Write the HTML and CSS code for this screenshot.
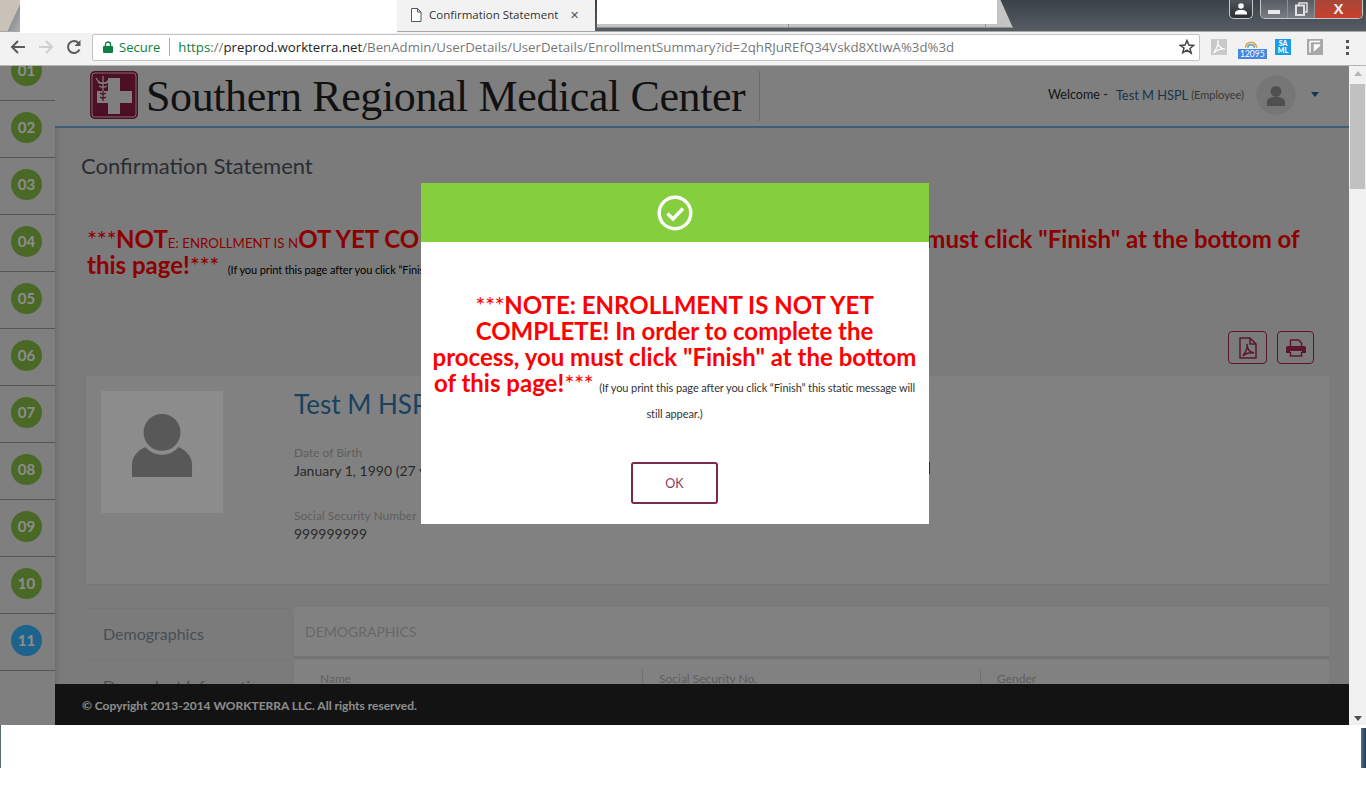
FILE: index.html
```html
<!DOCTYPE html>
<html lang="en">
<head>
	<meta charset="UTF-8">
	<title>Confirmation Statement</title>
	<link rel="stylesheet" href="styles.css">
</head>
<body>
	<div class="tabstrip">
		<div class="corner-tab"></div>
		<div class="blank-tab"></div>
		<div class="active-tab">
			<svg class="tab-icon" width="12" height="14" viewBox="0 0 12 14"><path d="M1.500.5h6l3.500 3.500v9.500h-9.500zM7.500.5v3.500h3.500" fill="#fff" stroke="#555"/></svg>
			<span class="tab-title">Confirmation Statement</span>
			<span class="tab-close">&#10005;</span>
		</div>
		<div class="back-tabs">
			<div class="blank-tab-2"></div>
		</div>
		<div class="window-buttons">
			<div class="win-user">
				<svg width="14" height="12" viewBox="0 0 14 12"><circle cx="7" cy="3" r="2.800" fill="#fff"/><path d="M1 11.500v-2c1-2 3-2.500 6-2.500s5 .5 6 2.500v2z" fill="#fff"/></svg>
			</div>
			<div class="win-group">
				<div class="win-min"><i></i></div>
				<div class="win-max">
					<svg width="13" height="14" viewBox="0 0 13 14"><path d="M4 3V1h8v9h-3" fill="none" stroke="#e0e0e0" stroke-width="1.500"/><rect x="1" y="3.500" width="8" height="9.500" fill="none" stroke="#e0e0e0" stroke-width="2"/></svg>
				</div>
				<div class="win-close">X</div>
			</div>
		</div>
	</div>

	<div class="toolbar">
		<svg class="nav-icon" width="18" height="18" viewBox="0 0 18 18"><path d="M16 9H3M9 3L3 9l6 6" fill="none" stroke="#5a5a5a" stroke-width="2"/></svg>
		<svg class="nav-icon" width="18" height="18" viewBox="0 0 18 18"><path d="M2 9h13M9 3l6 6-6 6" fill="none" stroke="#cfcfcf" stroke-width="2"/></svg>
		<svg class="nav-icon" width="18" height="18" viewBox="0 0 18 18"><path d="M14.500 11.500A6 6 0 1 1 13.500 5" fill="none" stroke="#5a5a5a" stroke-width="2"/><path d="M15.500 2v6h-6z" fill="#5a5a5a"/></svg>
		<div class="omnibox">
			<svg class="lock" width="10" height="12" viewBox="0 0 10 12"><path d="M2.500 5V3.500a2.500 2.500 0 0 1 5 0V5" fill="none" stroke="#0b8043" stroke-width="1.400"/><rect y="5" width="10" height="7" rx="1" fill="#0b8043"/></svg>
			<span class="secure">Secure</span>
			<span class="url"><span class="url-green">https</span><span class="url-grey">://</span><span class="url-host">preprod.workterra.net</span><span class="url-grey">/BenAdmin/UserDetails/UserDetails/EnrollmentSummary?id=2qhRJuREfQ34Vskd8XtIwA%3d%3d</span></span>
			<svg class="star" width="16" height="16" viewBox="0 0 16 16"><path d="M8 1.500l1.900 4.500 4.800.4-3.700 3.100 1.200 4.700L8 11.200l-4.200 2.500L5 9 1.300 6.400l4.800-.4z" fill="none" stroke="#444" stroke-width="1.500"/></svg>
		</div>
		<div class="extensions">
			<div class="ext ext-pdf">
				<svg width="16" height="16" viewBox="0 0 16 16"><path d="M7 2c-1 3 2 8 7 8-4-.5-9 1-11 4 1-3 5-7 4-12z" fill="none" stroke="#fff" stroke-width="1.200"/></svg>
			</div>
			<div class="ext ext-rainbow">
				<svg width="20" height="12" viewBox="0 0 20 12"><path d="M3 12a7 7 0 0 1 14 0" fill="none" stroke="#e8a33d" stroke-width="2"/><path d="M6 12a4 4 0 0 1 8 0" fill="none" stroke="#6aa7c9" stroke-width="2"/></svg>
				<span class="badge">12095</span>
			</div>
			<div class="ext ext-saml">SA<br>ML</div>
			<div class="ext ext-grey">
				<svg width="14" height="14" viewBox="0 0 14 14"><path d="M2 1.500h10M2 1.500v11M6.500 5h5v.5L6.500 10z" fill="#fff" stroke="#fff" stroke-width="1.500"/></svg>
			</div>
			<div class="menu-dots"><i></i><i></i><i></i></div>
		</div>
	</div>

	<div class="viewport">
		<div class="page">
			<div class="rail">
				<div class="step"><span class="step-num">01</span></div>
				<div class="step"><span class="step-num">02</span></div>
				<div class="step"><span class="step-num">03</span></div>
				<div class="step"><span class="step-num">04</span></div>
				<div class="step"><span class="step-num">05</span></div>
				<div class="step"><span class="step-num">06</span></div>
				<div class="step"><span class="step-num">07</span></div>
				<div class="step"><span class="step-num">08</span></div>
				<div class="step"><span class="step-num">09</span></div>
				<div class="step"><span class="step-num">10</span></div>
				<div class="step current"><span class="step-num">11</span></div>
			</div>

			<div class="main">
				<header class="site-header">
					<div class="logo">
						<svg class="logo-mark" width="50" height="50" viewBox="0 0 50 50">
							<rect x="1" y="0" width="48" height="48" rx="5" fill="#8f1c45"/>
							<rect x="3" y="2" width="44" height="44" rx="3" fill="none" stroke="#d8c4cb" stroke-width="1"/>
							<path d="M19 7h12v13h12v12H31v11H19V32H8V20h11z" fill="#e8e8e8"/>
							<path d="M7 7c2 4 5 5 7 5s5-1 7-5M14 5v15M9 11c2 2 8 2 10 0M10 15c2 1.500 6 1.500 8 0" fill="none" stroke="#e8e8e8" stroke-width="1.200"/>
							<path d="M14 20v10M11 22c2 1.500 4 1.500 6 0M11 26c2 1.500 4 1.500 6 0" fill="none" stroke="#8f1c45" stroke-width="1.200"/>
						</svg>
						<span class="logo-text">Southern Regional Medical Center</span>
					</div>
					<div class="user-box">
						<span class="welcome">Welcome -</span>
						<span class="user-name">Test M HSPL</span>
						<span class="user-role">(Employee)</span>
						<span class="user-avatar">
							<svg width="20" height="22" viewBox="0 0 22 24"><circle cx="11" cy="7" r="6" fill="#919191"/><path d="M1 23v-4c0-4 4-6 10-6s10 2 10 6v4z" fill="#919191"/></svg>
						</span>
						<span class="user-caret"></span>
					</div>
				</header>

				<h1 class="page-title">Confirmation Statement</h1>

				<p class="notice"><span class="asterisks">***</span>NOT<span class="notice-small">E: ENROLLMENT IS N</span>OT YET COMPLETE! In order to complete the process, you must click "Finish" at the bottom of this page!<span class="asterisks">***</span> <span class="notice-note">(If you print this page after you click “Finish” this static message will still appear.)</span></p>

				<div class="doc-actions">
					<button class="doc-btn doc-pdf">
						<svg width="18" height="22" viewBox="0 0 18 22"><path d="M1 1h10l6 6v14H1z" fill="none" stroke="#a82850" stroke-width="1.500"/><path d="M11 1v6h6" fill="none" stroke="#a82850" stroke-width="1.500"/><path d="M8 7c0 4 2 8 7 9-4-.5-8 0-11 3 2-3 5-7 4-12z" fill="none" stroke="#a82850" stroke-width="1.500"/></svg>
					</button>
					<button class="doc-btn doc-print">
						<svg width="20" height="18" viewBox="0 0 20 18"><path d="M4.500 7V1h8l3 3v3M4.500 13v4h11v-4" fill="none" stroke="#a82850" stroke-width="1.500"/><path d="M0 9a2 2 0 0 1 2-2h16a2 2 0 0 1 2 2v5h-4v-2H4v2H0z" fill="#a82850"/></svg>
					</button>
				</div>

				<section class="profile">
					<div class="profile-photo">
						<svg width="62" height="64" viewBox="0 0 62 66"><circle cx="31" cy="20" r="19" fill="#a0a0a0"/><path d="M0 66V54C0 44 7 38 14 35c4 5 10 8 17 8s13-3 17-8c7 3 14 9 14 19v12z" fill="#a0a0a0"/></svg>
					</div>
					<div class="profile-info">
						<h2 class="profile-name">Test M HSPL</h2>
						<div class="field">
							<div class="field-label">Date of Birth</div>
							<div class="field-value">January 1, 1990 (27 years)</div>
						</div>
						<div class="field">
							<div class="field-label">Social Security Number</div>
							<div class="field-value">999999999</div>
						</div>
					</div>
					<span class="profile-edge"></span>
				</section>

				<section class="details">
					<nav class="side-tabs">
						<div class="side-tab">Demographics</div>
						<div class="side-tab">Dependent Information</div>
					</nav>
					<div class="detail-panel">
						<div class="panel-head">DEMOGRAPHICS</div>
						<div class="panel-row">
							<div class="panel-cell">Name</div>
							<div class="panel-cell">Social Security No.</div>
							<div class="panel-cell">Gender</div>
						</div>
					</div>
				</section>

				<footer class="site-footer">© Copyright 2013-2014 WORKTERRA LLC. All rights reserved.</footer>
			</div>

			<div class="backdrop">
				<div class="modal">
					<div class="modal-head">
						<svg width="36" height="36" viewBox="0 0 36 36"><circle cx="18" cy="18" r="15.800" fill="none" stroke="#fff" stroke-width="3.400"/><path d="M10.500 18.500l5.500 5.500 10-10.500" fill="none" stroke="#fff" stroke-width="3.500"/></svg>
					</div>
					<div class="modal-body">
						<p class="modal-text"><span class="asterisks">***</span>NOTE: ENROLLMENT IS NOT YET COMPLETE! In order to complete the process, you must click "Finish" at the bottom of this page!<span class="asterisks">***</span> <span class="modal-note">(If you print this page after you click “Finish” this static message will still appear.)</span></p>
						<button class="modal-ok">OK</button>
					</div>
				</div>
			</div>
		</div>

		<div class="scrollbar">
			<span class="arrow-up"></span>
			<span class="thumb"></span>
			<span class="arrow-down"></span>
		</div>
	</div>

	<div class="bottom-strip">
		<span class="sliver-left"></span>
		<span class="sliver-right"></span>
	</div>
</body>
</html>
```

FILE: styles.css
```css
* {
	box-sizing: border-box;
}

html,
body {
	margin: 0;
	padding: 0;
	background: #fff;
}

body {
	width: 1366px;
	height: 812px;
	overflow: hidden;
	font-family: 'Lato', sans-serif;
}

/* browser chrome */
.tabstrip {
	height: 31px;
	display: flex;
	position: relative;
	background: linear-gradient(#3a4149, #565d64);
}

.corner-tab {
	width: 20px;
	height: 31px;
	background: linear-gradient(115deg, #c9c2b8 0%, #c9c2b8 62%, #8f9498 66%, #aeb1b4 100%);
}

.blank-tab {
	width: 377px;
	height: 33px;
	background: #fff;
	z-index: 1;
}

.active-tab {
	width: 198px;
	height: 31px;
	display: flex;
	align-items: center;
	padding: 0 0 2px 13px;
	background: #f2f2f2;
	font-family: 'Open Sans', sans-serif;
	font-size: 11.500px;
	color: #333;
}

.tab-title {
	margin-left: 7px;
}

.tab-close {
	margin-left: 12px;
	font-size: 11px;
	color: #555;
}

.back-tabs {
	width: 416px;
	height: 28px;
	margin-left: 2px;
	border-bottom: 1px solid #8f8f8f;
	background: linear-gradient(90deg, transparent 191px, #8f8f8f 191px, #8f8f8f 192px, transparent 192px, transparent 388px, #8f8f8f 388px, #8f8f8f 389px, transparent 389px), #c4c4c4;
	clip-path: polygon(0 0, 97% 0, 100% 100%, 0 100%);
}

.blank-tab-2 {
	width: 400px;
	height: 24px;
	background: #fff;
}

.window-buttons {
	margin-left: auto;
	margin-right: 3px;
	display: flex;
	align-items: flex-start;
	gap: 7px;
}

.win-user {
	width: 24px;
	height: 19px;
	display: flex;
	align-items: center;
	justify-content: center;
	border: 1px solid #c5c8ca;
	border-top: 0;
	border-radius: 0 0 5px 5px;
	background: linear-gradient(#4e5459, #2b3035);
}

.win-group {
	display: flex;
	height: 19px;
	border: 1px solid #c5c8ca;
	border-top: 0;
	border-radius: 0 0 5px 5px;
	overflow: hidden;
}

.win-min,
.win-max {
	width: 27px;
	display: flex;
	align-items: center;
	justify-content: center;
	border-right: 1px solid #8d9296;
	background: linear-gradient(#565c61, #787e83);
}

.win-min i {
	width: 12px;
	height: 4px;
	margin-top: 6px;
	background: #e8e8e8;
}

.win-close {
	width: 47px;
	text-align: center;
	font-family: 'Liberation Sans', sans-serif;
	font-size: 15px;
	font-weight: 700;
	line-height: 17px;
	color: #eee;
	background: linear-gradient(#a8463a, #c8402c);
}

.toolbar {
	height: 35px;
	display: flex;
	align-items: center;
	padding: 0 0 3px 9px;
	border-top: 1px solid #a8a8a8;
	border-bottom: 1px solid #b5b5b5;
	background: #f2f2f2;
}

.nav-icon {
	margin-right: 10px;
}

.omnibox {
	width: 1108px;
	height: 27px;
	margin-left: -1px;
	display: flex;
	align-items: center;
	padding: 0 4px 0 10px;
	border: 1px solid #c4c4c4;
	border-radius: 2px;
	background: #fff;
	font-family: 'Open Sans', sans-serif;
	font-size: 13.260px;
	white-space: nowrap;
}

.secure {
	margin-left: 6px;
	padding-right: 9px;
	border-right: 1px solid #aaa;
	color: #0b8043;
	font-size: 13px;
}

.url {
	margin-left: 8px;
	color: #777;
}

.url-green {
	color: #0b8043;
}

.url-host {
	color: #222;
}

.star {
	margin-left: auto;
}

.extensions {
	flex: 1;
	display: flex;
	align-items: center;
	padding-left: 11px;
}

.ext {
	width: 16px;
	height: 16px;
	margin-right: 16px;
	display: flex;
	align-items: center;
	justify-content: center;
}

.ext-pdf {
	background: #c9c9c9;
}

.ext-rainbow {
	position: relative;
	align-items: flex-start;
	margin-top: -4px;
}

.badge {
	position: absolute;
	top: 12px;
	left: -5px;
	padding: 0 2px;
	background: #4a86e0;
	color: #fff;
	font-size: 8.500px;
	line-height: 10px;
}

.ext-saml {
	background: #189ee8;
	color: #fff;
	font-size: 7px;
	font-weight: 900;
	line-height: 7px;
	text-align: center;
}

.ext-grey {
	background: #a8a8a8;
}

.menu-dots {
	display: flex;
	flex-direction: column;
	gap: 3px;
	margin-left: 7px;
}

.menu-dots i {
	width: 3px;
	height: 3px;
	background: #555;
}

/* page under the dialog, colours are before the 45% backdrop */
.viewport {
	height: 659px;
	display: flex;
}

.page {
	width: 1349px;
	height: 659px;
	display: flex;
	position: relative;
	overflow: hidden;
	background: #e0e0e0;
}

.rail {
	width: 55px;
	flex: none;
	margin-top: -22px;
	background: #e8e8e8;
	box-shadow: 2px 0 4px #c4c4c4;
	z-index: 1;
}

.step {
	height: 57px;
	padding: 11px 0 0 11px;
	border-bottom: 1px solid #9b9b9b;
}

.step-num {
	width: 31px;
	height: 31px;
	display: block;
	border-radius: 50%;
	background: #88c048;
	color: #fff;
	font-size: 15px;
	font-weight: 700;
	line-height: 31px;
	text-align: center;
}

.current .step-num {
	background: #38b4ff;
}

.main {
	flex: 1;
	min-width: 0;
	position: relative;
}

.site-header {
	height: 62px;
	display: flex;
	justify-content: space-between;
	position: relative;
	padding: 5px 0 0 34px;
	border-bottom: 2px solid #70b0da;
	background: #e8e8e8;
	z-index: 2;
}

.logo {
	width: 671px;
	height: 50px;
	display: flex;
	align-items: center;
	border-right: 1px solid #c4c4c4;
}

.logo-mark {
	flex: none;
}

.logo-text {
	margin-left: 7px;
	padding-top: 2px;
	font-family: 'Liberation Serif', serif;
	font-size: 44px;
	letter-spacing: -0.400px;
	line-height: 50px;
	color: #1f1f1f;
	white-space: nowrap;
}

.user-box {
	display: flex;
	align-items: center;
	padding: 0 30px 8px 0;
	font-size: 12.800px;
	color: #2a2a2a;
}

.welcome {
	font-size: 12.600px;
}

.user-name {
	margin-left: 8px;
	color: #2f6090;
}

.user-role {
	margin-left: 3px;
	font-size: 11px;
	color: #666;
}

.user-avatar {
	width: 40px;
	height: 40px;
	margin: 0 15px 0 12px;
	display: flex;
	align-items: flex-end;
	justify-content: center;
	padding-bottom: 7px;
	border-radius: 50%;
	border: 1px solid #dcdcdc;
	background: #d8d8d8;
}

.user-caret {
	width: 0;
	height: 0;
	border: 4px solid transparent;
	border-top: 5px solid #2f6090;
	border-bottom: 0;
}

.page-title {
	margin: 24px 0 0 26px;
	font-size: 22px;
	font-weight: 400;
	line-height: 28px;
	color: #4d555d;
}

.notice {
	margin: 46px 30px 0 32px;
	font-size: 24px;
	font-weight: 700;
	line-height: 26px;
	color: #f00;
}

.notice-small {
	font-size: 13.300px;
	font-weight: 400;
	line-height: 1;
}

.asterisks {
	font-weight: 400;
	letter-spacing: -0.500px;
}

.notice-note {
	margin-left: 3px;
	font-size: 11px;
	font-weight: 400;
	letter-spacing: -0.100px;
	line-height: 1;
	color: #000;
}

.doc-actions {
	height: 33px;
	margin: 53px 35px 0 0;
	display: flex;
	justify-content: flex-end;
	gap: 10px;
}

.doc-btn {
	width: 39px;
	height: 33px;
	display: flex;
	align-items: center;
	justify-content: center;
	padding: 0;
	border: 1px solid #a82850;
	border-radius: 4px;
	background: transparent;
}

.doc-print {
	width: 37px;
}

.profile {
	height: 209px;
	margin: 12px 20px 0 31px;
	display: flex;
	position: relative;
	padding: 15px;
	background: #ececec;
	border-bottom: 1px solid #d8d8d8;
}

.profile-photo {
	width: 122px;
	height: 122px;
	display: flex;
	align-items: flex-start;
	justify-content: center;
	padding-top: 22px;
	background: #fff;
}

.profile-info {
	margin-left: 71px;
}

.profile-name {
	margin: 0;
	font-size: 26px;
	font-weight: 400;
	line-height: 26px;
	color: #2f78b0;
}

.field {
	margin-top: 28px;
}

.field + .field {
	margin-top: 27px;
}

.field-label {
	font-size: 12px;
	line-height: 16px;
	color: #adadad;
}

.field-value {
	font-size: 14px;
	line-height: 20px;
	color: #4c4c4c;
}

.profile-edge {
	position: absolute;
	left: 842px;
	top: 86px;
	width: 2px;
	height: 12px;
	background: #555;
}

.details {
	margin: 22px 20px 0 31px;
	display: flex;
	gap: 3px;
}

.side-tabs {
	width: 205px;
	margin-top: 1px;
}

.side-tab {
	height: 52px;
	padding: 14px 0 0 17px;
	border-top: 1px solid #d8d8d8;
	font-size: 16px;
	line-height: 22px;
	color: #868f9a;
	white-space: nowrap;
}

.detail-panel {
	flex: 1;
}

.panel-head {
	height: 52px;
	padding: 16px 0 0 11px;
	border-bottom: 3px solid #d4d4d4;
	background: #ececec;
	font-size: 14px;
	line-height: 18px;
	color: #bbb;
}

.panel-row {
	height: 40px;
	margin-top: 1px;
	display: flex;
	padding-top: 9px;
	background: #ececec;
}

.panel-cell {
	width: 338px;
	padding-left: 26px;
	border-right: 1px solid #cfcfcf;
	font-size: 12px;
	line-height: 20px;
	color: #adadad;
}

.panel-cell:first-child {
	width: 349px;
}

.panel-cell + .panel-cell {
	padding-left: 16px;
}

.panel-cell:last-child {
	border-right: 0;
}

.site-footer {
	position: absolute;
	left: 0;
	right: 0;
	bottom: 0;
	height: 41px;
	padding: 14px 0 0 27px;
	background: #242424;
	font-size: 12px;
	font-weight: 700;
	line-height: 16px;
	color: #fff;
	z-index: 2;
}

/* dialog */
.backdrop {
	position: absolute;
	inset: 0;
	padding-top: 117px;
	background: rgba(0, 0, 0, 0.45);
	z-index: 3;
}

.modal {
	width: 508px;
	height: 341px;
	margin: 0 auto;
	background: #fff;
}

.modal-head {
	height: 59px;
	display: flex;
	align-items: center;
	justify-content: center;
	background: #85cf3f;
}

.modal-body {
	padding: 50px 12px 0;
	text-align: center;
}

.modal-text {
	margin: 0;
	font-size: 24px;
	font-weight: 700;
	line-height: 26px;
	color: #f00;
}

.modal-note {
	font-size: 11px;
	font-weight: 400;
	letter-spacing: -0.100px;
	line-height: 1;
	color: #333;
}

.modal-ok {
	display: block;
	width: 87px;
	height: 42px;
	margin: 40px auto 0;
	border: 2px solid #7b2a4d;
	border-radius: 3px;
	background: #fff;
	font-family: 'Lato', sans-serif;
	font-size: 12.500px;
	color: #8a3a5a;
}

.scrollbar {
	width: 17px;
	height: 659px;
	display: flex;
	flex-direction: column;
	align-items: center;
	background: #f1f1f1;
}

.arrow-up,
.arrow-down {
	width: 0;
	height: 0;
	border: 4px solid transparent;
}

.arrow-up {
	margin-top: 5px;
	border-bottom: 5px solid #b5b5b5;
	border-top: 0;
}

.thumb {
	width: 15px;
	height: 105px;
	margin-top: 8px;
	background: #c1c1c1;
}

.arrow-down {
	margin-top: auto;
	margin-bottom: 4px;
	border-top: 5px solid #505050;
	border-bottom: 0;
}

.bottom-strip {
	height: 43px;
	display: flex;
	justify-content: space-between;
}

.sliver-left {
	width: 1px;
	background: #5a6a70;
}

.sliver-right {
	width: 5px;
	margin-top: 3px;
	background: linear-gradient(90deg, #4f7391, #1f3a55);
}
```
